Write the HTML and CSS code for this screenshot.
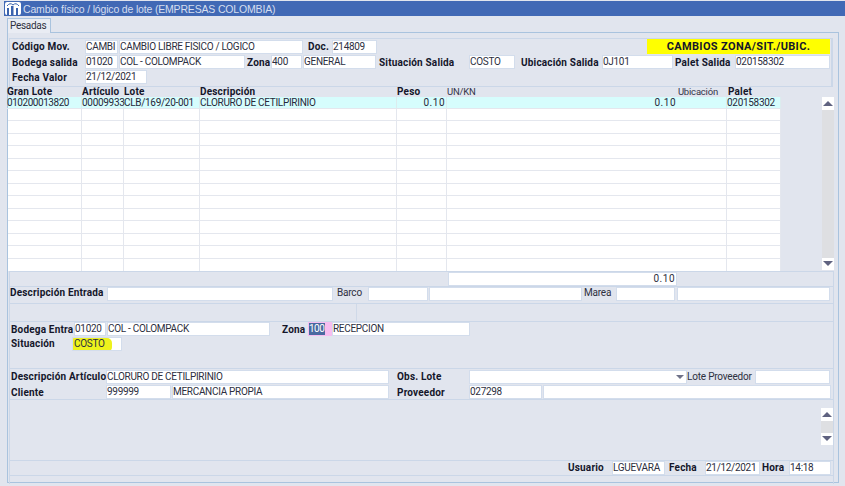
FILE: index.html
```html
<!DOCTYPE html>
<html lang="es">
<head>
<meta charset="utf-8">
<title>Cambio físico / lógico de lote</title>
<link rel="stylesheet" href="styles.css">
</head>
<body>
<div class="titlebar">
  <svg class="appicon" viewBox="0 0 16 13" width="16" height="13"><rect width="16" height="13" rx="2" fill="#fff"/><path d="M2 13V6h2v7zM6 13V4h2.5v9zM11 13V6h2v7z" fill="#3a62ad"/><path d="M2 4q3-4 6-1q3-3 6 1" fill="none" stroke="#3a62ad" stroke-width="1"/></svg>
  <span class="titletext">Cambio físico / lógico de lote (EMPRESAS COLOMBIA)</span>
</div>
<div class="tabstrip"><div class="tab">Pesadas</div></div>
<div class="panel">
  <section class="sec-top">
    <div class="row">
      <span class="lb w75 pl2">Código Mov.</span><span class="f w33">CAMBI</span><span class="f w184 ml1">CAMBIO LIBRE FISICO / LOGICO</span>
      <span class="lb w29 pl5">Doc.</span><span class="f w45">214809</span>
      <span class="banner">CAMBIOS ZONA/SIT./UBIC.</span>
    </div>
    <div class="row">
      <span class="lb w75 pl2">Bodega salida</span><span class="f w33">01020</span><span class="f w126 ml1">COL - COLOMPACK</span>
      <span class="lb w26 pl2">Zona</span><span class="f w31">400</span><span class="f w73 ml1">GENERAL</span>
      <span class="lb w93 pl3">Situación Salida</span><span class="f w46">COSTO</span>
      <span class="lb w87 pl6">Ubicación Salida</span><span class="f w71">0J101</span>
      <span class="lb w62 pl2">Palet Salida</span><span class="f w95">020158302</span>
    </div>
    <div class="row">
      <span class="lb w75 pl2">Fecha Valor</span><span class="f w62">21/12/2021</span>
    </div>
  </section>

  <div class="gridwrap">
    <div class="table">
      <div class="thead">
        <span class="th">Gran Lote</span><span class="th">Artículo</span><span class="th">Lote</span><span class="th">Descripción</span><span class="th">Peso</span>
        <span class="th-split"><span class="thn">UN/KN</span><span class="thn">Ubicación</span></span>
        <span class="th">Palet</span>
      </div>
      <div class="tr tr-sel"><span class="first">010200013820</span><span>00009933</span><span>CLB/169/20-001</span><span>CLORURO DE CETILPIRINIO</span><span class="num">0.10</span><span class="num2">0.10</span><span>020158302</span></div>
      <div class="tr"><span></span><span></span><span></span><span></span><span></span><span></span><span></span></div>
      <div class="tr"><span></span><span></span><span></span><span></span><span></span><span></span><span></span></div>
      <div class="tr"><span></span><span></span><span></span><span></span><span></span><span></span><span></span></div>
      <div class="tr"><span></span><span></span><span></span><span></span><span></span><span></span><span></span></div>
      <div class="tr"><span></span><span></span><span></span><span></span><span></span><span></span><span></span></div>
      <div class="tr"><span></span><span></span><span></span><span></span><span></span><span></span><span></span></div>
      <div class="tr"><span></span><span></span><span></span><span></span><span></span><span></span><span></span></div>
      <div class="tr"><span></span><span></span><span></span><span></span><span></span><span></span><span></span></div>
      <div class="tr"><span></span><span></span><span></span><span></span><span></span><span></span><span></span></div>
      <div class="tr"><span></span><span></span><span></span><span></span><span></span><span></span><span></span></div>
      <div class="tr"><span></span><span></span><span></span><span></span><span></span><span></span><span></span></div>
      <div class="tr"><span></span><span></span><span></span><span></span><span></span><span></span><span></span></div>
      <div class="tr tr-last"><span></span><span></span><span></span><span></span><span></span><span></span><span></span></div>
    </div>
    <div class="scroll scroll-grid">
      <div class="sb-btn"><i class="tri-up"></i></div>
      <div class="sb-track"></div>
      <div class="sb-btn"><i class="tri-down"></i></div>
    </div>
  </div>

  <div class="lower">
    <div class="band-total"><span class="f w229 right">0.10</span></div>
    <div class="band-desc">
      <span class="lb w97 pl0">Descripción Entrada</span><span class="f w226">&nbsp;</span>
      <span class="ln w35 pl4">Barco</span><span class="f w60">&nbsp;</span><span class="f w153 ml1">&nbsp;</span>
      <span class="ln w34 pl2">Marea</span><span class="f w59">&nbsp;</span><span class="f w153 ml2">&nbsp;</span>
    </div>
    <div class="band-empty"><span class="vline"></span></div>
    <div class="band-entry">
      <div class="row row-tight">
        <span class="lb w64 pl1">Bodega Entra</span><span class="f w32">01020</span><span class="f w163 ml1">COL - COLOMPACK</span>
        <span class="lb w38 pl12">Zona</span><span class="f f-pink w24"><span class="sel">100</span></span><span class="f w138">RECEPCION</span>
      </div>
      <div class="row row-tight">
        <span class="lb w62 pl1">Situación</span><span class="f w50 f-mark"><span class="mark"></span><span class="marktext">COSTO</span></span>
      </div>
    </div>
    <div class="band-art">
      <div class="row">
        <span class="lb w96 pl1">Descripción Artículo</span><span class="f w283">CLORURO DE CETILPIRINIO</span>
        <span class="lb w80 pl8">Obs. Lote</span><span class="f w218 f-select"><i class="tri-down tri-sm"></i></span>
        <span class="ln w68">Lote Proveedor</span><span class="f w75">&nbsp;</span>
      </div>
      <div class="row">
        <span class="lb w96 pl1">Cliente</span><span class="f w65">999999</span><span class="f w217 ml1">MERCANCIA PROPIA</span>
        <span class="lb w80 pl8">Proveedor</span><span class="f w73">027298</span><span class="f w288 ml1">&nbsp;</span>
      </div>
    </div>
    <div class="band-notes">
      <div class="scroll scroll-notes">
        <div class="sb-btn"><i class="tri-up"></i></div>
        <div class="sb-track"></div>
        <div class="sb-btn"><i class="tri-down"></i></div>
      </div>
    </div>
    <div class="band-foot">
      <span class="lb w44">Usuario</span><span class="f w53">LGUEVARA</span>
      <span class="lb w40 pl4">Fecha</span><span class="f w55">21/12/2021</span>
      <span class="lb w29 pl2">Hora</span><span class="f w42">14:18</span>
    </div>
  </div>
</div>
</body>
</html>
```

FILE: styles.css
```css
* { box-sizing: border-box; }
html, body { margin: 0; padding: 0; }
body {
  width: 845px;
  height: 486px;
  overflow: hidden;
  background: #e1e5ee;
  font-family: Roboto, "Liberation Sans", sans-serif;
  font-size: 10px;
  color: #26283a;
  padding-top: 1px;
}
.titlebar {
  margin-left: 4px;
  height: 15px;
  background: #4169b5;
  display: flex;
  align-items: center;
  padding-left: 1px;
}
.appicon { flex: none; }
.titletext {
  margin-left: 2px;
  color: #d5deef;
  font-family: "Liberation Sans", sans-serif;
  font-size: 10.5px;
  letter-spacing: -.17px;
  white-space: nowrap;
}
.tabstrip { height: 16px; padding: 2px 0 0 7px; }
.tab {
  width: 44px;
  height: 15px;
  position: relative;
  z-index: 1;
  border: 1px solid #a9c3de;
  border-bottom: none;
  background: #e9ecf3;
  padding-left: 2px;
  line-height: 13px;
  letter-spacing: -.3px;
  color: #2e3040;
}
.panel {
  margin-left: 7px;
  width: 832px;
  height: 451px;
  border: 1px solid #a9c3de;
  padding-top: 5px;
}
.sec-top {
  margin-left: 1px;
  width: 824px;
  height: 49px;
  border: 1px solid #cbd7e8;
  border-right-width: 2px;
}
.row { display: flex; align-items: center; height: 15.4px; }
.row-tight { height: 14.6px; }
.lb, .th {
  font-weight: 700;
  font-size: 10px;
  letter-spacing: .18px;
  color: #14162a;
  white-space: nowrap;
  flex: none;
}
.ln { font-size: 10px; letter-spacing: -.2px; color: #2e3040; white-space: nowrap; flex: none; }
.f {
  flex: none;
  display: block;
  height: 14px;
  line-height: 12px;
  background: #fff;
  border: 1px solid #d3ddec;
  padding-left: 0;
  letter-spacing: -.3px;
  white-space: nowrap;
  overflow: hidden;
  color: #2c2e40;
}
.right { text-align: right; padding-right: 1px; letter-spacing: .5px; }
.banner {
  margin-left: auto;
  margin-right: 1px;
  width: 183px;
  height: 15px;
  background: #ffff00;
  font-weight: 700;
  font-size: 11px;
  line-height: 15px;
  text-align: center;
  color: #14162a;
  letter-spacing: .35px;
}
.w24 { width: 24px; } .w26 { width: 26px; } .w29 { width: 29px; } .w31 { width: 31px; }
.w32 { width: 32px; } .w33 { width: 33px; } .w34 { width: 34px; } .w35 { width: 35px; }
.w38 { width: 38px; } .w40 { width: 40px; } .w42 { width: 42px; } .w44 { width: 44px; }
.w45 { width: 45px; } .w46 { width: 46px; }
.w50 { width: 50px; } .w53 { width: 53px; } .w55 { width: 55px; } .w59 { width: 59px; }
.w60 { width: 60px; } .w62 { width: 62px; } .w64 { width: 64px; } .w65 { width: 65px; }
.w68 { width: 68px; } .w71 { width: 71px; } .w73 { width: 73px; } .w75 { width: 75px; }
.w80 { width: 80px; } .w87 { width: 87px; } .w93 { width: 93px; } .w95 { width: 95px; }
.w96 { width: 96px; } .w97 { width: 97px; } .w126 { width: 126px; } .w138 { width: 138px; }
.w153 { width: 153px; } .w163 { width: 163px; } .w184 { width: 184px; } .w217 { width: 217px; }
.w218 { width: 218px; } .w226 { width: 226px; } .w229 { width: 229px; } .w283 { width: 283px; }
.w288 { width: 288px; }
.pl0 { padding-left: 0; } .pl1 { padding-left: 1px; } .pl2 { padding-left: 2px; } .pl3 { padding-left: 3px; }
.pl4 { padding-left: 4px; } .pl5 { padding-left: 5px; } .pl6 { padding-left: 6px; } .pl8 { padding-left: 8px; }
.pl12 { padding-left: 12px; }
.ml1 { margin-left: 1px; } .ml2 { margin-left: 2px; }

.gridwrap { display: flex; height: 184px; }
.table { width: 773px; flex: none; }
.thead {
  display: grid;
  grid-template-columns: 75px 42px 76px 197px 50px 281px 53px;
  height: 10px;
  line-height: 10px;
  margin-left: -1px;
}
.th-split { display: flex; justify-content: space-between; font-size: 9.5px; letter-spacing: -.2px; color: #34364a; padding-right: 10px; }
.thn { white-space: nowrap; }
.tr {
  display: grid;
  grid-template-columns: 74px 42px 76px 197px 50px 280px 54px;
  height: 12.5px;
  background: #fff;
  line-height: 11px;
}
.tr > span {
  border-right: 1px solid #e4e7ee;
  border-bottom: 1px solid #e4e7ee;
  white-space: nowrap;
  overflow: visible;
  padding-left: 0;
  letter-spacing: -.3px;
}
.tr > .first { margin-left: -1px; letter-spacing: -.45px; }
.tr-sel { background: #d6fdfd; height: 11.5px; }
.tr-sel > span { border-right-color: #dcecee; }
.tr-last > span { border-bottom: none; }
.tr > .num { text-align: right; padding-right: 1px; letter-spacing: .5px; }
.tr > .num2 { text-align: right; padding-right: 50px; letter-spacing: .5px; }

.scroll { width: 12px; display: flex; flex-direction: column; flex: none; }
.scroll-grid { margin: 10px 0 0 41px; height: 173px; }
.scroll-notes { height: 37px; }
.sb-btn { height: 12.5px; background: #fff; display: flex; align-items: center; justify-content: center; flex: none; }
.sb-track { flex: 1; background: #dedfe2; }
.tri-up, .tri-down { display: block; width: 0; height: 0; border-left: 5px solid transparent; border-right: 5px solid transparent; }
.tri-up { border-bottom: 5px solid #5f6280; }
.tri-down { border-top: 5px solid #5f6280; }
.tri-sm { border-left-width: 4px; border-right-width: 4px; border-top: 4px solid #6f7288; }

.lower {
  margin-left: 1px;
  width: 825px;
  height: 213px;
  border-left: 1px solid #cbd7e8;
  border-right: 1px solid #cbd7e8;
}
.band-total { height: 16px; border-top: 1px solid #cbd7e8; border-bottom: 1px solid #cbd7e8; padding-left: 438px; }
.band-desc { height: 17px; display: flex; align-items: flex-start; border-bottom: 1px solid #cbd7e8; }
.band-empty { height: 18px; border-bottom: 1px solid #cbd7e8; padding-left: 346px; }
.vline { display: block; width: 1px; height: 100%; background: #cfd9e8; }
.band-entry { height: 47px; border-bottom: 1px solid #cbd7e8; }
.f-pink { background: #f6bdf0; border-color: #f6bdf0; padding: 0; }
.sel { display: block; width: 16px; height: 12px; background: #4a6aa0; color: #fff; text-align: left; line-height: 12px; letter-spacing: -.5px; }
.f-mark { position: relative; }
.mark {
  position: absolute;
  left: -1px;
  top: 0;
  width: 40px;
  height: 13px;
  background: #eef21c;
  border-radius: 2px 5px 4px 2px;
}
.marktext { position: relative; padding-left: 1px; }
.band-art { height: 31px; border-bottom: 1px solid #cbd7e8; }
.f-select { display: flex; align-items: center; justify-content: flex-end; padding-right: 2px; }
.band-notes { height: 61px; border-bottom: 1px solid #cbd7e8; display: flex; align-items: flex-start; justify-content: flex-end; padding-top: 8px; }
.band-foot { height: 15px; display: flex; align-items: flex-start; justify-content: flex-end; padding-right: 2px; border-bottom: 1px solid #cbd7e8; line-height: 14px; }
```
